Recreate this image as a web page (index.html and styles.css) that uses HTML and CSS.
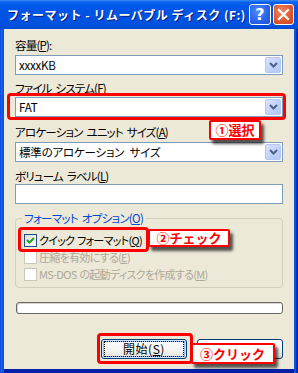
FILE: index.html
```html
<!DOCTYPE html>
<html>
<head lang="ja">
    <meta charset="UTF-8">
    <title>フォーマット</title>
    <link rel="stylesheet" href="styles.css">
</head>
<body>
<div class="window">
    <div class="titlebar">
        <span class="title">フォーマット - リムーバブル ディスク (F:)</span>
        <span class="tbtn help">?</span>
        <span class="tbtn close">
            <svg width="13" height="13" viewBox="0 0 13 13"><path d="M2 2 L11 11 M11 2 L2 11" stroke="#fff" stroke-width="2.2" stroke-linecap="square"/></svg>
        </span>
    </div>
    <div class="client">
        <div class="label lbl-cap">容量(<u>P</u>):</div>
        <div class="select sel-cap">
            <span class="value">xxxxKB</span>
            <span class="drop"><svg width="9" height="6" viewBox="0 0 9 6"><path d="M1 1 L4.5 4.5 L8 1" fill="none" stroke="#4d6185" stroke-width="2"/></svg></span>
        </div>
        <div class="label lbl-fs">ファイル システム(<u>F</u>)</div>
        <div class="select sel-fs">
            <span class="value">FAT</span>
            <span class="drop"><svg width="9" height="6" viewBox="0 0 9 6"><path d="M1 1 L4.5 4.5 L8 1" fill="none" stroke="#4d6185" stroke-width="2"/></svg></span>
        </div>
        <div class="label lbl-alloc">アロケーション ユニット サイズ(<u>A</u>)</div>
        <div class="select sel-alloc">
            <span class="value">標準のアロケーション サイズ</span>
            <span class="drop"><svg width="9" height="6" viewBox="0 0 9 6"><path d="M1 1 L4.5 4.5 L8 1" fill="none" stroke="#4d6185" stroke-width="2"/></svg></span>
        </div>
        <div class="label lbl-vol">ボリューム ラベル(<u>L</u>)</div>
        <div class="textbox"></div>

        <div class="group">
            <div class="legend">フォーマット オプション(<u>O</u>)</div>
            <div class="check-row row-quick">
                <span class="checkbox">
                    <svg width="11" height="11" viewBox="0 0 11 11"><path d="M2 5 L4.5 7.5 L9 3" fill="none" stroke="#21a121" stroke-width="2"/></svg>
                </span>
                <span>クイック フォーマット(<u>Q</u>)</span>
            </div>
            <div class="check-row disabled">
                <span class="checkbox"></span>
                <span>圧縮を有効にする(<u>E</u>)</span>
            </div>
            <div class="check-row disabled">
                <span class="checkbox"></span>
                <span>MS-DOS の起動ディスクを作成する(<u>M</u>)</span>
            </div>
        </div>

        <div class="progress"></div>

        <div class="buttons">
            <button class="btn default"><span class="focus">開始(<u>S</u>)</span></button>
            <button class="btn"></button>
        </div>
    </div>

    <div class="mark mark-fs"></div>
    <div class="mark mark-quick"></div>
    <div class="mark mark-start"></div>
    <div class="callout callout-1">①選択</div>
    <div class="callout callout-2">②チェック</div>
    <div class="callout callout-3">③クリック</div>
</div>
</body>
</html>
```

FILE: styles.css
```css
*{
    padding: 0;
    margin: 0;
    box-sizing: border-box;
}
body{
    font-family: "Noto Sans CJK JP", sans-serif;
    font-size: 12px;
    background: #ffffff;
}
u{
    text-decoration: underline;
    text-underline-offset: 1px;
}
.window{
    position: relative;
    width: 298px;
    height: 373px;
    display: flex;
    flex-direction: column;
    background: linear-gradient(to right, #0831d9 0, #166aee 1px, #0a5ce8 2px, #0855dd 3px, #0855dd 294px, #0a54e0 295px, #0a4fd8 296px, #001ea0 297px);
}
.titlebar{
    height: 29px;
    display: flex;
    align-items: center;
    padding: 0 4px 0 7px;
    background: linear-gradient(#3d8ef7 0, #0a62ee 2px, #0058ea 6px, #0054e3 14px, #0052e0 22px, #004fd9 27px, #0046cc 29px);
}
.title{
    flex: 1;
    color: #ffffff;
    font-weight: bold;
    font-size: 12px;
    letter-spacing: 0.5px;
    text-shadow: 1px 1px #0a1883;
    white-space: nowrap;
}
.tbtn{
    width: 21px;
    height: 21px;
    border: 1px solid #ffffff;
    border-radius: 3px;
    display: flex;
    align-items: center;
    justify-content: center;
    color: #ffffff;
    font-family: "DejaVu Sans", sans-serif;
    font-weight: bold;
    font-size: 16px;
}
.help{
    width: 22px;
    margin-right: 2px;
    background: radial-gradient(circle at 40% 35%, #4f8cff 0, #2d65ea 55%, #1e4fd0 100%);
}
.close{
    background: radial-gradient(circle at 40% 35%, #f08a6c 0, #e0582f 55%, #c8421e 100%);
}
.client{
    flex: 1;
    margin: 0 4px 4px;
    padding: 9px 11px 0;
    background: #ece9d8;
    box-shadow: 0 4px 0 #0020a8;
}
.label{
    line-height: 14px;
    height: 14px;
    white-space: nowrap;
    font-size: 11.5px;
    font-feature-settings: "palt";
    letter-spacing: -0.8px;
    word-spacing: 2px;
    color: #000000;
}
.lbl-fs{
    margin-top: 6px;
}
.lbl-alloc{
    margin-top: 8px;
}
.lbl-vol{
    margin-top: 7px;
}
.select,
.textbox{
    height: 20px;
    border: 1px solid #7f9db9;
    background: #ffffff;
    display: flex;
    align-items: center;
}
.sel-cap{
    margin-top: 3px;
}
.sel-fs{
    margin-top: 2px;
}
.sel-alloc{
    margin-top: 3px;
}
.textbox{
    margin-top: 1px;
}
.value{
    flex: 1;
    padding-left: 3px;
    white-space: nowrap;
    font-size: 11.5px;
    font-feature-settings: "palt";
    letter-spacing: -0.2px;
    word-spacing: 3px;
    line-height: 16px;
}
.drop{
    width: 16px;
    height: 16px;
    margin-right: 1px;
    border-radius: 2px;
    border: 1px solid #b5c7f2;
    background: linear-gradient(135deg, #dbe5fc 0, #c3d3fa 50%, #b2c6f5 100%);
    display: flex;
    align-items: center;
    justify-content: center;
}
.group{
    margin-top: 14px;
    height: 70px;
    border: 1px solid #d0d0bf;
    border-radius: 4px;
    padding: 0 0 0 8px;
}
.legend{
    margin-top: -8px;
    margin-left: -2px;
    padding: 0 2px;
    width: fit-content;
    line-height: 14px;
    background: #ece9d8;
    color: #0046d5;
    font-size: 11.5px;
    font-feature-settings: "palt";
    letter-spacing: -0.7px;
    word-spacing: 2px;
}
.check-row{
    display: flex;
    align-items: center;
    gap: 2px;
    height: 14px;
    line-height: 14px;
    margin-top: 2px;
    font-size: 11px;
    font-feature-settings: "palt";
    letter-spacing: -0.7px;
    word-spacing: 1px;
    white-space: nowrap;
}
.row-quick{
    margin-top: 8px;
}
.check-row.disabled{
    margin-top: 3px;
    color: #aca899;
}
.checkbox{
    width: 13px;
    height: 13px;
    border: 1px solid #1c5180;
    background: linear-gradient(135deg, #dcdcd7 0, #f4f4f0 60%, #ffffff 100%);
    display: flex;
    align-items: center;
    justify-content: center;
}
.disabled .checkbox{
    border-color: #cac8bb;
    background: #ffffff;
}
.progress{
    margin: 14px 0 0 1px;
    height: 12px;
    border: 1px solid #686868;
    border-radius: 3px;
    background: #ffffff;
    box-shadow: inset 1px 1px 0 #d6d3c6;
}
.buttons{
    margin-top: 25px;
    display: flex;
    justify-content: flex-end;
    gap: 10px;
}
.btn{
    width: 86px;
    height: 20px;
    border: 1px solid #003c74;
    border-radius: 3px;
    background: linear-gradient(#ffffff 0, #f3f3ef 60%, #e6e5dd 90%, #d6d0c5 100%);
    font-family: "Noto Sans CJK JP", sans-serif;
    font-size: 12px;
    color: #000000;
    display: flex;
    align-items: center;
    justify-content: center;
}
.btn.default{
    box-shadow: inset 0 0 0 1px #cee7ff, inset 0 0 0 2px #98b8ea;
}
.focus{
    display: block;
    width: 78px;
    height: 14px;
    line-height: 13px;
    text-align: center;
    letter-spacing: 0.5px;
    outline: 1px dotted #000000;
}
.mark{
    position: absolute;
    border: 3px solid #ff0000;
    border-radius: 4px;
}
.mark-fs{
    left: 7px;
    top: 93px;
    width: 279px;
    height: 27px;
}
.mark-quick{
    left: 18px;
    top: 227px;
    width: 131px;
    height: 25px;
}
.mark-start{
    left: 97px;
    top: 333px;
    width: 96px;
    height: 31px;
}
.callout{
    position: absolute;
    background: #ffffff;
    border: 2px solid #ff0000;
    border-radius: 2px;
    color: #ff0000;
    font-weight: bold;
    font-size: 13px;
    line-height: 15px;
    text-align: center;
    white-space: nowrap;
    box-shadow: 3px 4px 3px rgba(0, 0, 0, 0.65);
}
.callout-1{
    left: 209px;
    top: 120px;
    width: 52px;
    height: 20px;
}
.callout-2{
    left: 148px;
    top: 229px;
    width: 82px;
    height: 18px;
    line-height: 14px;
}
.callout-3{
    left: 191px;
    top: 343px;
    width: 84px;
    height: 21px;
    line-height: 17px;
    text-align: left;
    padding-left: 7px;
}
```
